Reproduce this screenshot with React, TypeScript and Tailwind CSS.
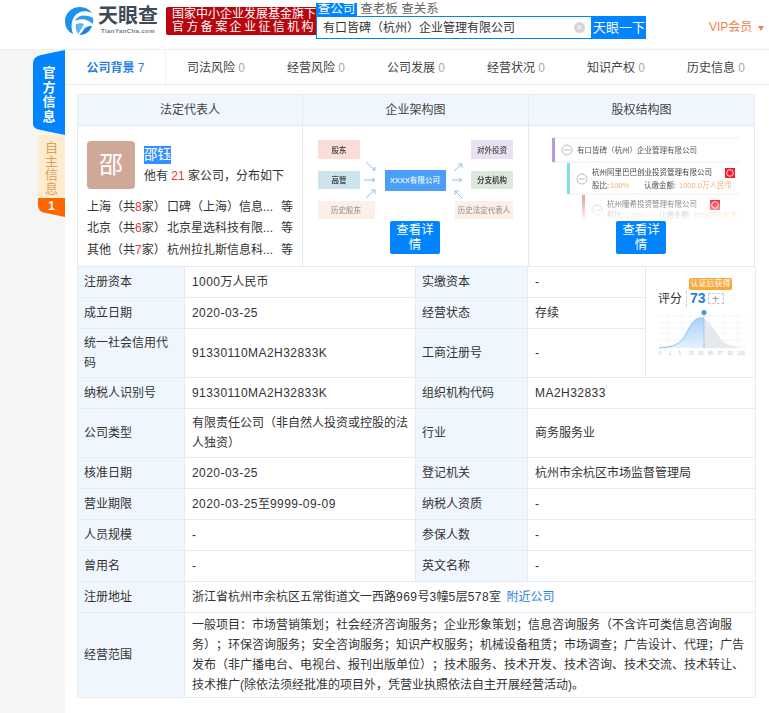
const label = "bg-[#eff6fd] border border-[#e4ecf3] px-[6px] text-[#333] leading-[20px]";
const value = "border border-[#e4ecf3] pl-[7px] pr-[5px] text-[#333] leading-[20px]";
const num = "tracking-[0.45px]";

const tabs = [
  ["司法风险", "0"],
  ["经营风险", "0"],
  ["公司发展", "0"],
  ["经营状况", "0"],
  ["知识产权", "0"],
  ["历史信息", "0"],
];

const regions = [
  ["上海\uFF08共", "8", "家\uFF09", "口碑\uFF08上海\uFF09信息..."],
  ["北京\uFF08共", "6", "家\uFF09", "北京星选科技有限..."],
  ["其他\uFF08共", "7", "家\uFF09", "杭州拉扎斯信息科..."],
];

const companyName = "有口皆碑\uFF08杭州\uFF09企业管理有限公司";
const companyType = "有限责任公司\uFF08非自然人投资或控股的法人独资\uFF09";
const scope =
  "一般项目\uFF1A市场营销策划\uFF1B社会经济咨询服务\uFF1B企业形象策划\uFF1B信息咨询服务\uFF08不含许可类信息咨询服务\uFF09\uFF1B环保咨询服务\uFF1B安全咨询服务\uFF1B知识产权服务\uFF1B机械设备租赁\uFF1B市场调查\uFF1B广告设计、代理\uFF1B广告发布\uFF08非广播电台、电视台、报刊出版单位\uFF09\uFF1B技术服务、技术开发、技术咨询、技术交流、技术转让、技术推广(除依法须经批准的项目外\uFF0C凭营业执照依法自主开展经营活动)。";

function Logo() {
  return (
    <svg width="30" height="30" viewBox="0 0 30 30">
      <path d="M1 15C1 7 8 1 16 1c5 0 9 2 12 6-7-3-14-2-18 4-3 5-3 11-1 17C4 26 1 21 1 15Z" fill="#1d8fee" />
      <path d="M11 15c3-6 10-7 18-3 .6 2 .4 4-.2 6-5-5-12-6-17.8-3Z" fill="#2c9df2" />
      <path d="M28 20c-2 6-7 9-13 9 3-2 4-5 6-7 2-1.5 4-2 7-2Z" fill="#1683e4" />
      <path d="M12 18c3-1 6-1 8 0-2 3-3 6-6 10-2-3-3-7-2-10Z" fill="#59b5f5" />
    </svg>
  );
}

function OrgChart() {
  const t = "text-[7.5px] font-bold";
  return (
    <svg width="200" height="82" viewBox="0 0 200 82" className="blur-[0.4px]">
      <rect x="0" y="1" width="42" height="19" fill="#fbdcd8" />
      <text x="21" y="13.5" textAnchor="middle" fill="#555" className={t}>股东</text>
      <rect x="0" y="32" width="42" height="18" fill="#cde4ee" />
      <text x="21" y="44" textAnchor="middle" fill="#444" className={t}>高管</text>
      <rect x="0" y="62" width="57" height="18" fill="#fdeee6" />
      <text x="28" y="74" textAnchor="middle" fill="#aaa" className={t}>历史股东</text>
      <rect x="67" y="31" width="61" height="21" fill="#4a9ef8" />
      <text x="97" y="44" textAnchor="middle" fill="#dcefff" className={t}>XXXX有限公司</text>
      <rect x="153" y="1" width="42" height="19" fill="#e9e0f1" />
      <text x="174" y="13.5" textAnchor="middle" fill="#666" className={t}>对外投资</text>
      <rect x="153" y="32" width="42" height="18" fill="#dbe8dc" />
      <text x="174" y="44" textAnchor="middle" fill="#444" className={t}>分支机构</text>
      <rect x="137" y="62" width="58" height="18" fill="#fdeee6" />
      <text x="166" y="74" textAnchor="middle" fill="#aaa" className={t}>历史法定代表人</text>
      <g stroke="#8fc1f5" strokeWidth="1" fill="none">
        <path d="M48 23l9 8M57 31v-3M57 31h-3" />
        <path d="M46 41h11M57 41l-3-2M57 41l-3 2" />
        <path d="M48 59l9-8M57 51h-4M57 51v4" />
        <path d="M136 32l8-7M144 25h-4M144 25v4" />
        <path d="M134 41h10M144 41l-3-2M144 41l-3 2" />
        <path d="M144 59l-7-7M137 52v4M137 52h4" />
      </g>
    </svg>
  );
}

function RedMark({ x, y, size }: { x: number; y: number; size: number }) {
  return (
    <g>
      <rect x={x} y={y} width={size} height={size} fill="#f01e2c" />
      <circle cx={x + size / 2} cy={y + size / 2} r={size / 3} fill="none" stroke="#fff" strokeWidth="1" opacity="0.8" />
    </g>
  );
}

function EquityChart() {
  const t = "text-[7.5px]";
  return (
    <svg width="187" height="84" viewBox="0 0 187 84" className="blur-[0.3px]">
      <path d="M0 2h187M3 26h184M18 58h169" stroke="#eee" fill="none" />
      <rect x="0" y="2" width="3" height="24" fill="#b79be0" />
      <circle cx="15" cy="14" r="5" fill="#fff" stroke="#bbb" />
      <path d="M12 14h6" stroke="#bbb" />
      <text x="25" y="17" fill="#555" className={t}>{companyName}</text>
      <rect x="15" y="27" width="3" height="31" fill="#86dde0" />
      <circle cx="30" cy="43" r="5" fill="#fff" stroke="#bbb" />
      <path d="M27 43h6" stroke="#bbb" />
      <text x="40" y="39" fill="#444" className={t}>杭州阿里巴巴创业投资管理有限公司</text>
      <RedMark x={173} y={32} size={10} />
      <text x="40" y="52" fill="#555" className={t}>股比:</text>
      <text x="58" y="52" fill="#f4b26b" className={t}>100%</text>
      <text x="92" y="52" fill="#555" className={t}>认缴金额:</text>
      <text x="127" y="52" fill="#f4b26b" className={t}>1000.0万人民币</text>
      <rect x="30" y="59" width="3" height="25" fill="#eaa593" />
      <circle cx="45" cy="74" r="5" fill="#fff" stroke="#ccc" />
      <path d="M42 74h6" stroke="#ccc" />
      <text x="55" y="71" fill="#666" className={t}>杭州瞳希投资管理有限公司</text>
      <RedMark x={158} y={64} size={10} />
      <text x="55" y="82" fill="#888" className={t}>股比:</text>
      <text x="73" y="82" fill="#f4b26b" className={t}>100%</text>
      <text x="107" y="82" fill="#888" className={t}>认缴金额:</text>
      <text x="142" y="82" fill="#f4b26b" className="text-[7px]">5000万人民币</text>
    </svg>
  );
}

function ScoreChart() {
  return (
    <svg width="88" height="46" viewBox="0 0 88 46" className="block">
      <defs>
        <linearGradient id="bell" x1="0" y1="0" x2="0" y2="1">
          <stop offset="0" stopColor="#a9d3f8" />
          <stop offset="1" stopColor="#e4f1fd" />
        </linearGradient>
      </defs>
      <path d="M1 6h86M1 12h86M1 18h86M1 24h86M1 30h86M1 36h86M10 3v35M24 3v35M38 3v35M52 3v35M66 3v35M80 3v35" stroke="#f5f6f9" strokeWidth="1" fill="none" />
      <path d="M1 38C15 37 22 35 28 24 33 13 38 8 42 8c1 0 3 0 4 1V38Z" fill="url(#bell)" />
      <path d="M46 9c5 2 11 11 16 19 5 7 13 9 24 10H46Z" fill="#e6e8eb" />
      <path d="M1 38C15 37 22 35 28 24 33 13 38 8 42 8c1 0 3 0 4 1" stroke="#8cc0ef" fill="none" />
      <path d="M46 4V38" stroke="#8fb4e8" strokeDasharray="1.5 1" />
      <circle cx="46" cy="2.5" r="2.5" fill="#4f8fe8" />
      {["0", "1", "5", "15", "50", "85", "97", "99", "100"].map((n, i) => (
        <text key={n} x={1 + i * 9.8} y="45" fill="#c4c4c4" className="text-[4.5px]">{n}</text>
      ))}
    </svg>
  );
}

function DetailButton() {
  return (
    <button className="absolute left-[87px] top-[95px] w-[50px] h-[33px] rounded-[2px] bg-[#0084ff] px-[6px] text-white text-[12.5px] leading-[15px]">
      查看详情
    </button>
  );
}

export default function App() {
  return (
    <div className="w-[769px] h-[713px] overflow-hidden bg-white text-[12px] text-[#333] [text-spacing-trim:space-all] [font-family:'Liberation_Sans','Noto_Sans_CJK_SC',sans-serif]">
      <header className="h-[50px] flex items-start bg-white border-b border-[#eeeeee]">
        <div className="ml-[64px] mt-[6px]">
          <Logo />
        </div>
        <div className="ml-[3px] mt-[6px] flex flex-col items-center w-[62px]">
          <span className="text-[20px] leading-[21px] font-bold text-[#3d4a55]">天眼查</span>
          <span className="text-[6px] leading-[8px] font-bold text-[#6b7a86] tracking-[0.4px]">TianYanCha.com</span>
        </div>
        <div className="ml-[7px] mt-[7px] w-[150px] h-[28px] overflow-hidden rounded-l-[2px] bg-[#b9050e] pl-[6px] pt-[1px] text-white text-[12px] leading-[13px] whitespace-nowrap">
          <div>国家中小企业发展基金旗下</div>
          <div className="tracking-[2.4px]">官方备案企业征信机构</div>
        </div>
        <div className="w-[330px] pt-[3px]">
          <div className="flex h-[13px] items-center text-[12.5px] leading-[13px] text-[#666]">
            <span className="w-[41px] bg-[#0084ff] text-center text-white">查公司</span>
            <span className="ml-[3px] w-[38px] text-center">查老板</span>
            <span className="ml-[3px] w-[38px] text-center">查关系</span>
          </div>
          <div className="flex h-[23px]">
            <div className="w-[276px] flex items-center border border-[#0084ff] pl-[6px] pr-[6px] text-[12px] text-[#333]">
              <span className="flex-1">{companyName}</span>
              <span className="w-[11px] h-[11px] rounded-full bg-[#d4d4d4] flex items-center justify-center text-white text-[10px] leading-none">×</span>
            </div>
            <button className="w-[54px] bg-[#0084ff] text-white text-[13px]">天眼一下</button>
          </div>
        </div>
        <div className="ml-[63px] mt-[20px] flex items-center text-[#f5814e] text-[12px] leading-[15px]">
          <span>VIP会员</span>
          <span className="ml-[6px] mt-[1px] w-0 h-0 border-x-[3.5px] border-x-transparent border-t-[5px] border-t-[#f5814e]" />
        </div>
      </header>

      <div className="flex h-[663px]">
        <aside className="w-[65px] bg-[#f5f5f5] flex flex-col items-end">
          <div className="relative z-10 w-[32px] h-[85px] bg-[#0084ff] flex flex-col items-center pt-[16px] text-white text-[13px] font-bold leading-[14.5px] [clip-path:path('M32_0L8_5Q0_7_0_13L0_74Q0_79_8_80L32_85Z')]">
            <span>官</span>
            <span>方</span>
            <span>信</span>
            <span>息</span>
          </div>
          <div className="w-[27px] h-[82px] bg-[#fdecd0] flex flex-col items-center pt-[6px] text-[#e0a050] text-[13px] leading-[13.5px] [clip-path:path('M0_0L27_0L27_82L8_78Q0_77_0_70Z')]">
            <span>自</span>
            <span>主</span>
            <span>信</span>
            <span>息</span>
            <span className="mt-[3px] w-full h-[19px] bg-[#ff6600] text-white text-center font-bold text-[12px] leading-[16px]">1</span>
          </div>
        </aside>

        <main className="flex-1">
          <nav className="h-[35px] pl-px grid grid-cols-[100px_100px_100px_100px_100px_100px_100px] border-b border-[#eeeeee] text-[12px] leading-[36px]">
            <div className="text-center font-bold text-[#2b7fe0] border-r border-[#f0f0f0]">
              公司背景 <span className="font-normal">7</span>
            </div>
            {tabs.map(([name, count]) => (
              <div key={name} className="text-center text-[#444]">
                {name} <span className="text-[#aaa]">{count}</span>
              </div>
            ))}
          </nav>

          <div className="ml-[12px] mt-[9px] w-[678px] grid grid-cols-[224px_226px_226px] border border-[#e4ecf3]">
            <div className="h-[31px] bg-[#eff6fd] border-b border-[#e4ecf3] text-center leading-[31px] text-[12px] text-[#444]">法定代表人</div>
            <div className="h-[31px] bg-[#eff6fd] border-b border-l border-[#e4ecf3] text-center leading-[31px] text-[#444]">企业架构图</div>
            <div className="h-[31px] bg-[#eff6fd] border-b border-l border-[#e4ecf3] text-center leading-[31px] text-[#444]">股权结构图</div>

            <div className="h-[140px] pl-[9px] pt-[15px]">
              <div className="flex">
                <div className="w-[48px] h-[48px] rounded-[4px] bg-[#d0a898] flex items-center justify-center text-white text-[24px]">邵</div>
                <div className="ml-[9px]">
                  <div className="h-[18px] mt-[5px] w-fit bg-[#3390ff] text-white text-[13.5px] leading-[18px]">邵钰</div>
                  <div className="mt-[2px] leading-[20px] text-[12px]">
                    他有 <span className="text-[#e4393c]">21</span> 家公司{"\uFF0C"}分布如下
                  </div>
                </div>
              </div>
              <div className="mt-[7px] flex flex-col">
                {regions.map(([a, n, b, company]) => (
                  <div key={a} className="flex h-[21.5px] items-center leading-[20px] whitespace-nowrap">
                    <span className="w-[80px]">
                      {a}<span className="text-[#e4393c]">{n}</span>{b}
                    </span>
                    <span className="w-[114px]">{company}</span>
                    <span>等</span>
                  </div>
                ))}
              </div>
            </div>

            <div className="relative h-[140px] border-l border-[#e4ecf3] pl-[15px] pt-[13px] overflow-hidden">
              <OrgChart />
              <DetailButton />
            </div>

            <div className="relative h-[140px] border-l border-[#e4ecf3] pl-[23px] pt-[10px] overflow-hidden">
              <EquityChart />
              <div className="absolute left-0 top-[72px] w-full h-[24px] bg-gradient-to-b from-transparent to-white" />
              <DetailButton />
            </div>
          </div>

          <table className="ml-[12px] -mt-px w-[678px] table-fixed border-collapse">
            <colgroup>
              <col className="w-[107px]" />
              <col className="w-[231px]" />
              <col className="w-[112px]" />
              <col className="w-[118px]" />
              <col className="w-[110px]" />
            </colgroup>
            <tbody>
              <tr className="h-[31px]">
                <td className={label}>注册资本</td>
                <td className={value}><span className={num}>1000</span>万人民币</td>
                <td className={label}>实缴资本</td>
                <td className={value}>-</td>
                <td rowSpan={3} className="border border-[#e4ecf3] align-top">
                  <div className="relative pl-[12px] pt-[24px]">
                    <div className="flex items-center h-[15px]">
                      <span className="text-[12px] text-[#333]">评分</span>
                      <span className="ml-[4px] h-[16px] border-l border-dotted border-[#bbb]" />
                      <span className="ml-[3px] text-[14px] font-bold text-[#1f7fe0]">73</span>
                      <span className="ml-[2px] w-[16px] h-[11px] border border-dashed border-[#ccc] text-center text-[#999] text-[12px] leading-[10px]">+</span>
                    </div>
                    <div className="absolute left-[43px] top-[11px] w-[43px] h-[12px] rounded-[2px] bg-[#f8a83c] text-center text-white text-[8px] leading-[12px]">认证后获得</div>
                    <div className="mt-[4px]">
                      <ScoreChart />
                    </div>
                  </div>
                </td>
              </tr>
              <tr className="h-[31px]">
                <td className={label}>成立日期</td>
                <td className={value}><span className={num}>2020-03-25</span></td>
                <td className={label}>经营状态</td>
                <td className={value}>存续</td>
              </tr>
              <tr className="h-[49px]">
                <td className={label}>统一社会信用代码</td>
                <td className={value}><span className={num}>91330110MA2H32833K</span></td>
                <td className={label}>工商注册号</td>
                <td className={value}>-</td>
              </tr>
              <tr className="h-[31px]">
                <td className={label}>纳税人识别号</td>
                <td className={value}><span className={num}>91330110MA2H32833K</span></td>
                <td className={label}>组织机构代码</td>
                <td colSpan={2} className={value}><span className={num}>MA2H32833</span></td>
              </tr>
              <tr className="h-[49px]">
                <td className={label}>公司类型</td>
                <td className={value}>{companyType}</td>
                <td className={label}>行业</td>
                <td colSpan={2} className={value}>商务服务业</td>
              </tr>
              <tr className="h-[31px]">
                <td className={label}>核准日期</td>
                <td className={value}><span className={num}>2020-03-25</span></td>
                <td className={label}>登记机关</td>
                <td colSpan={2} className={value}>杭州市余杭区市场监督管理局</td>
              </tr>
              <tr className="h-[31px]">
                <td className={label}>营业期限</td>
                <td className={value}><span className={num}>2020-03-25</span>至<span className={num}>9999-09-09</span></td>
                <td className={label}>纳税人资质</td>
                <td colSpan={2} className={value}>-</td>
              </tr>
              <tr className="h-[31px]">
                <td className={label}>人员规模</td>
                <td className={value}>-</td>
                <td className={label}>参保人数</td>
                <td colSpan={2} className={value}>-</td>
              </tr>
              <tr className="h-[31px]">
                <td className={label}>曾用名</td>
                <td className={value}>-</td>
                <td className={label}>英文名称</td>
                <td colSpan={2} className={value}>-</td>
              </tr>
              <tr className="h-[31px]">
                <td className={label}>注册地址</td>
                <td colSpan={4} className={value}>
                  浙江省杭州市余杭区五常街道文一西路<span className={num}>969</span>号<span className={num}>3</span>幢<span className={num}>5</span>层<span className={num}>578</span>室 <span className="ml-[2px] text-[#2b7fe0]">附近公司</span>
                </td>
              </tr>
              <tr className="h-[85px]">
                <td className={label}>经营范围</td>
                <td colSpan={4} className={value}>{scope}</td>
              </tr>
            </tbody>
          </table>
        </main>
      </div>
    </div>
  );
}
